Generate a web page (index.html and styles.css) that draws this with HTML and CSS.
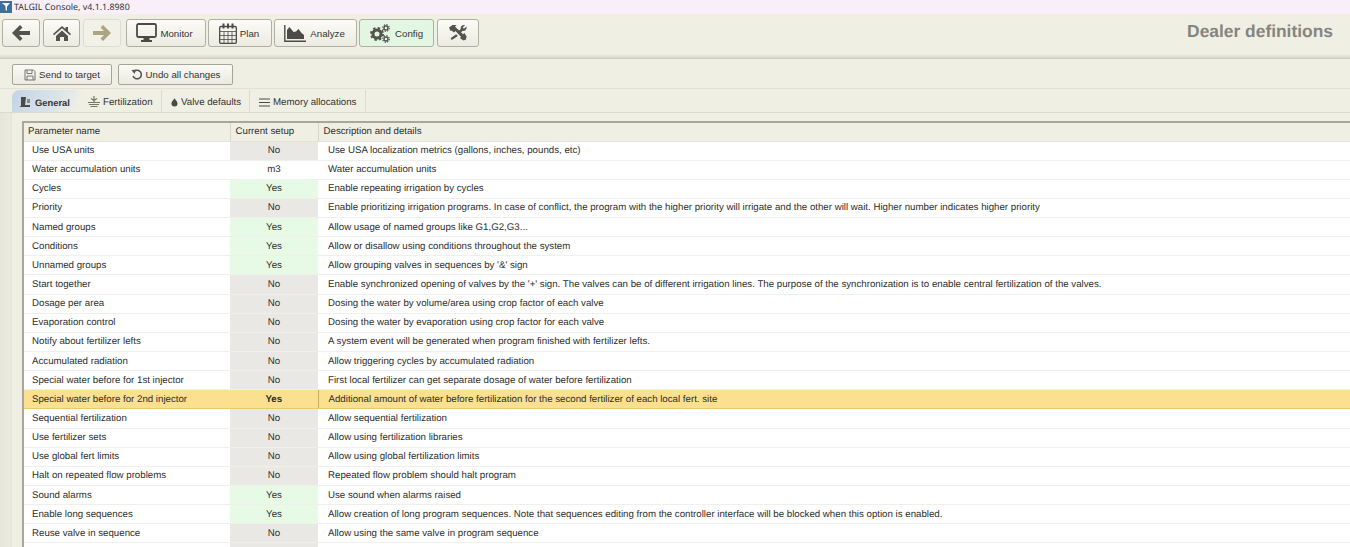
FILE: index.html
```html
<!DOCTYPE html>
<html lang="en">
  <head>
    <meta charset="UTF-8" />
    <title>TALGIL Console, v4.1.1.8980</title>
    <link rel="stylesheet" href="styles.css">
  </head>
  <body>
    <div class="titlebar">
      <svg class="appicon" viewBox="0 0 12 12"><rect width="12" height="12" fill="#3d6f9c"/><path d="M2 2h8L7 5.500V10L5.500 8.500V5L2 2z" fill="#fff"/></svg>
      <span>TALGIL Console, v4.1.1.8980</span>
    </div>

    <div class="toolbar">
      <div class="navgroup">
        <button class="tool nav"><svg width="18" height="16" viewBox="0 0 18 16"><path d="M8 0 0 8l8 8 2.500-2.500L7 10h11V6H7l3.500-3.500z" fill="#54544f"/></svg></button>
        <button class="tool nav"><svg width="18" height="15" viewBox="0 0 18 15"><path d="M9 0 0 8l1 1.200L9 2.200l8 7L18 8l-3-2.700V1h-2.500v2.100z" fill="#54544f"/><path d="M3 10 9 4.500l6 5.500v5h-4v-4H7v4H3z" fill="#54544f"/></svg></button>
        <button class="tool nav off"><svg width="18" height="16" viewBox="0 0 18 16"><path d="M10 0l8 8-8 8-2.500-2.500L11 10H0V6h11L7.500 2.500z" fill="#aaa683"/></svg></button>
      </div>
      <button class="tool monitor"><svg width="21" height="20" viewBox="0 0 21 20"><rect x="1" y="1" width="19" height="13" rx="1.500" fill="none" stroke="#4a4a47" stroke-width="1.800"/><path d="M7.500 14.500h6V17h2.500v2H5v-2h2.500z" fill="#4a4a47"/></svg>Monitor</button>
      <button class="tool plan"><svg width="18" height="21" viewBox="0 0 18 21"><rect x=".7" y="3.500" width="16.600" height="16.800" rx="1" fill="none" stroke="#4a4a47" stroke-width="1.300"/><path d="M1 8.500h16M1 12.500h16M1 16.500h16M5 8.500v12M9 8.500v12M13 8.500v12" stroke="#4a4a47" stroke-width=".8"/><path d="M4.500 .5v5M9 .5v5M13.500 .5v5" stroke="#4a4a47" stroke-width="2"/></svg>Plan</button>
      <button class="tool analyze"><svg width="22" height="17" viewBox="0 0 22 17"><path d="M.8 0v16.200H22" fill="none" stroke="#4a4a47" stroke-width="1.400"/><path d="M3 14V5l2.500-3 4 5 2.500-.5 2.500-2.500 3 4 2.500 2v4z" fill="#4a4a47"/></svg>Analyze</button>
      <button class="tool config"><svg width="21" height="19" viewBox="0 0 21 19"><circle cx="7" cy="10" r="4" fill="none" stroke="#54544f" stroke-width="3"/><circle cx="7" cy="10" r="6" fill="none" stroke="#54544f" stroke-width="2" stroke-dasharray="2.400 2.310"/><circle cx="16" cy="4" r="2" fill="none" stroke="#54544f" stroke-width="1.400"/><circle cx="16" cy="4" r="3.300" fill="none" stroke="#54544f" stroke-width="1.200" stroke-dasharray="1.300 1.290"/><circle cx="16" cy="15" r="2" fill="none" stroke="#54544f" stroke-width="1.400"/><circle cx="16" cy="15" r="3.300" fill="none" stroke="#54544f" stroke-width="1.200" stroke-dasharray="1.300 1.290"/></svg>Config</button>
      <button class="tool wrench"><svg width="18" height="16" viewBox="0 0 18 16"><path d="M12.800 10.500 15.500 8 17.500 11.500 17 14.500 14.500 15.500 11 13.300z" fill="#54544f"/><path d="M0 2.500 3.500 0h4L6 1.500 8 3.500 16 11l-2.500 2.500-7-7.500-1.500 1.500L2.500 5.500 1.500 6z" fill="#54544f"/><path d="M17.500 1.500 15 3.800 13.700 2.500 16 .3C13.500-.5 11.200 1.500 11.700 4L9.500 6.200 11.500 8 13.600 5.800C16 6.400 18.200 4 17.500 1.500zM7.200 9.200 1.600 13.200 2.800 15 8.900 11z" fill="#54544f"/></svg></button>
      <div class="pagetitle">Dealer definitions</div>
    </div>

    <div class="content">
      <div class="actions">
        <button class="action send"><svg width="12" height="12" viewBox="0 0 12 12"><path d="M1 1h8.500L11 2.500V11H1z" fill="none" stroke="#77776f"/><path d="M3 1v3.500h5V1M3 11V7h6v4" fill="none" stroke="#77776f"/></svg>Send to target</button>
        <button class="action undo"><svg width="12" height="12" viewBox="0 0 12 12"><path d="M3 2.500a4.300 4.300 0 1 1-1 4.500" fill="none" stroke="#55554f" stroke-width="1.500"/><path d="M.5 1 5 .8 3.500 5z" fill="#55554f"/></svg>Undo all changes</button>
      </div>

      <div class="tabs">
        <div class="tab active"><svg width="12" height="10" viewBox="0 0 12 10"><path d="M2 0h5L6 8h5v2H0l2-1z" fill="#4a4a47"/><path d="M8 2h3v4H8z" fill="#8a8a84"/></svg>General</div>
        <div class="tab fert"><svg width="12" height="12" viewBox="0 0 12 12"><path d="M6 0v6M3 2.500l3 2 3-2M0 6.500h12M1 8.500h10M2.500 10.500h7" fill="none" stroke="#77775f" stroke-width="1.200"/></svg>Fertilization</div>
        <div class="tab valve"><svg width="7" height="9" viewBox="0 0 8 10"><path d="M4 0C3 2 .5 3.500.5 6a3.500 3.500 0 0 0 7 0C7.500 3.500 5 2 4 0z" fill="#4a4a47"/></svg>Valve defaults</div>
        <div class="tab memory"><svg width="11" height="9" viewBox="0 0 11 9"><path d="M0 1h11M0 4.500h11M0 8h11" stroke="#4a4a47" stroke-width="1.200"/></svg>Memory allocations</div>
      </div>

      <div class="tablewrap">
        <table class="params">
          <thead>
            <tr><th class="name">Parameter name</th><th class="setup">Current setup</th><th class="desc">Description and details</th></tr>
          </thead>
          <tbody>
            <tr><td class="name">Use USA units</td><td class="setup no">No</td><td class="desc">Use USA localization metrics (gallons, inches, pounds, etc)</td></tr>
            <tr><td class="name">Water accumulation units</td><td class="setup">m3</td><td class="desc">Water accumulation units</td></tr>
            <tr><td class="name">Cycles</td><td class="setup yes">Yes</td><td class="desc">Enable repeating irrigation by cycles</td></tr>
            <tr><td class="name">Priority</td><td class="setup no">No</td><td class="desc">Enable prioritizing irrigation programs. In case of conflict, the program with the higher priority will irrigate and the other will wait. Higher number indicates higher priority</td></tr>
            <tr><td class="name">Named groups</td><td class="setup yes">Yes</td><td class="desc">Allow usage of named groups like G1,G2,G3...</td></tr>
            <tr><td class="name">Conditions</td><td class="setup yes">Yes</td><td class="desc">Allow or disallow using conditions throughout the system</td></tr>
            <tr><td class="name">Unnamed groups</td><td class="setup yes">Yes</td><td class="desc">Allow grouping valves in sequences by '&amp;' sign</td></tr>
            <tr><td class="name">Start together</td><td class="setup no">No</td><td class="desc">Enable synchronized opening of valves by the '+' sign. The valves can be of different irrigation lines. The purpose of the synchronization is to enable central fertilization of the valves.</td></tr>
            <tr><td class="name">Dosage per area</td><td class="setup no">No</td><td class="desc">Dosing the water by volume/area using crop factor of each valve</td></tr>
            <tr><td class="name">Evaporation control</td><td class="setup no">No</td><td class="desc">Dosing the water by evaporation using crop factor for each valve</td></tr>
            <tr><td class="name">Notify about fertilizer lefts</td><td class="setup no">No</td><td class="desc">A system event will be generated when program finished with fertilizer lefts.</td></tr>
            <tr><td class="name">Accumulated radiation</td><td class="setup no">No</td><td class="desc">Allow triggering cycles by accumulated radiation</td></tr>
            <tr><td class="name">Special water before for 1st injector</td><td class="setup no">No</td><td class="desc">First local fertilizer can get separate dosage of water before fertilization</td></tr>
            <tr class="selected"><td class="name">Special water before for 2nd injector</td><td class="setup">Yes</td><td class="desc">Additional amount of water before fertilization for the second fertilizer of each local fert. site</td></tr>
            <tr><td class="name">Sequential fertilization</td><td class="setup no">No</td><td class="desc">Allow sequential fertilization</td></tr>
            <tr><td class="name">Use fertilizer sets</td><td class="setup no">No</td><td class="desc">Allow using fertilization libraries</td></tr>
            <tr><td class="name">Use global fert limits</td><td class="setup no">No</td><td class="desc">Allow using global fertilization limits</td></tr>
            <tr><td class="name">Halt on repeated flow problems</td><td class="setup no">No</td><td class="desc">Repeated flow problem should halt program</td></tr>
            <tr><td class="name">Sound alarms</td><td class="setup yes">Yes</td><td class="desc">Use sound when alarms raised</td></tr>
            <tr><td class="name">Enable long sequences</td><td class="setup yes">Yes</td><td class="desc">Allow creation of long program sequences. Note that sequences editing from the controller interface will be blocked when this option is enabled.</td></tr>
            <tr><td class="name">Reuse valve in sequence</td><td class="setup no">No</td><td class="desc">Allow using the same valve in program sequence</td></tr>
            <tr><td class="name"></td><td class="setup no"></td><td class="desc"></td></tr>
          </tbody>
        </table>
      </div>
    </div>
  </body>
</html>
```

FILE: styles.css
```css
body {
  margin: 0;
  height: 547px;
  overflow: hidden;
  background: #f0efe4;
  font-family: "Liberation Sans", Arial, sans-serif;
  font-size: 9.7px;
  color: #2e2e2c;
  text-rendering: geometricPrecision;
}

.titlebar {
  height: 14px;
  background: #f8eff8;
  display: flex;
  align-items: center;
  gap: 2px;
  font-family: "Noto Sans", sans-serif;
  font-size: 8.850px;
  color: #333;
}

.appicon {
  width: 12px;
  height: 12px;
}

.toolbar {
  height: 45px;
  padding: 5px 0 0 2px;
  box-sizing: border-box;
  display: flex;
  align-items: flex-start;
  gap: 2px;
  border-bottom: 1px solid #cfcec3;
  background: linear-gradient(#f0efe4, #f0efe4 40px, #d9d8cc);
}

.navgroup {
  display: flex;
  gap: 3px;
  margin-right: 3px;
}

.tool {
  height: 28px;
  padding: 0;
  box-sizing: border-box;
  border: 1.500px solid #b0afa4;
  border-radius: 3px;
  background: linear-gradient(#fbfbf8, #ecebe1);
  display: flex;
  align-items: center;
  justify-content: center;
  gap: 3px;
  font-family: inherit;
  font-size: 9.7px;
  color: #333;
}

.nav { width: 37.700px; }
.nav.off { background: #f2f1e8; border-color: #dddcd1; }
.monitor { width: 80px; padding-right: 3px; }
.plan { width: 64px; padding-right: 2px; }
.analyze { width: 83px; gap: 4px; padding-right: 2px; }
.config { width: 75px; background: #e3f6e2; gap: 4px; }
.wrench { width: 42px; margin-left: 1px; }

.pagetitle {
  margin-left: auto;
  margin-right: 17px;
  margin-top: 2px;
  font-size: 17.400px;
  font-weight: bold;
  color: #858580;
}

.content {
  height: 488px;
  background: linear-gradient(to right, #e6e5da, #ecebe0 10px, #dfded3 11px, #f0efe4 12px);
}

.actions {
  display: flex;
  gap: 6px;
  padding: 5px 0 0 12px;
  height: 30px;
  box-sizing: border-box;
  background: #f0efe4;
  border-bottom: 1px solid #e2e1d6;
}

.action {
  height: 21px;
  padding: 0;
  box-sizing: border-box;
  border: 1px solid #a5a598;
  border-radius: 2px;
  background: linear-gradient(#fafaf6, #eceae0);
  display: flex;
  align-items: center;
  justify-content: center;
  gap: 3px;
  font-family: inherit;
  font-size: 9.7px;
  color: #333;
}

.send { width: 100px; }
.undo { width: 115px; }

.tabs {
  display: flex;
  height: 24px;
  padding: 1px 0 0 12px;
  box-sizing: border-box;
  background: #f0efe4;
  border-bottom: 1px solid #dcdbd0;
}

.tab {
  display: flex;
  align-items: center;
  gap: 3px;
  padding-top: 2px;
  border-right: 1px solid #dcdbd0;
  box-sizing: border-box;
  color: #333;
}

.tab.active {
  width: 83px;
  margin-right: -10px;
  padding-left: 7px;
  font-size: 9.400px;
  font-weight: bold;
  gap: 4px;
  background: linear-gradient(115deg, #c3d4e6, #dae3e9 50%, #f0efe4 80%);
  border-right: 0;
  border-radius: 8px 24px 0 0;
}

.fert { width: 77px; padding-left: 3px; }
.valve { width: 88px; padding-left: 9px; }
.memory { width: 116px; padding-left: 9px; }

.tablewrap {
  margin: 8px 0 0 22px;
  border-top: 2px solid #a8a89a;
  border-left: 2px solid #a8a89a;
}

.params {
  width: 100%;
  border-collapse: collapse;
  table-layout: fixed;
}

.params th {
  height: 18px;
  padding: 0;
  box-sizing: border-box;
  font-weight: normal;
  text-align: left;
  border-bottom: 1px solid #e4e3d8;
  background: #f0efe4;
}

.params th.name { width: 206px; padding-left: 4px; }
.params th.setup { width: 88px; padding-left: 5px; border-left: 1px solid #d8d7cc; }
.params th.desc { padding-left: 5px; border-left: 1px solid #d8d7cc; }

.params td {
  height: 19.150px;
  padding: 0;
  box-sizing: border-box;
  background: #fff;
  border-bottom: 1px solid #f0f0ea;
  white-space: nowrap;
}

.params td.name { padding-left: 8px; }
.params td.setup { text-align: center; }
.params td.desc { padding-left: 10px; }
.params td.no { background: #e9e8e4; }
.params td.yes { background: #e6fae6; }

.selected td {
  background: #fbe08f;
  border-top: 1px solid #e8c96e;
  border-bottom: 1px solid #e8c96e;
}

.selected td.setup { font-weight: bold; }
.selected td.desc { border-left: 1px solid #c9ad5c; }
```
